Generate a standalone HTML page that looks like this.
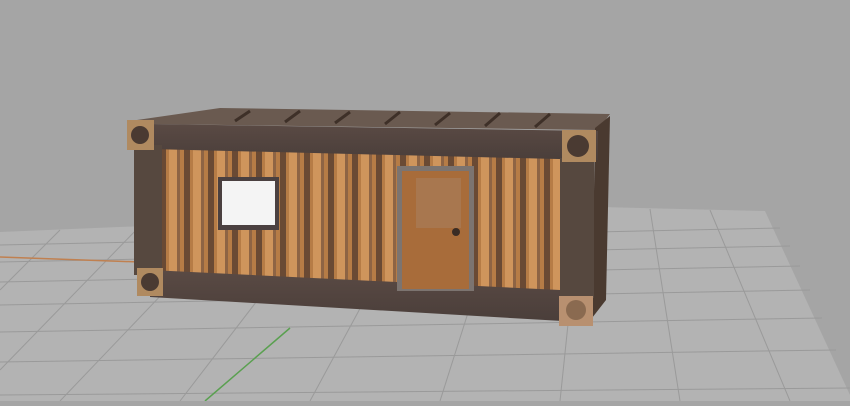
<!DOCTYPE html><html><head><style>body{margin:0;width:850px;height:401px;overflow:hidden;background:#a5a5a5}</style></head><body>
<svg width="850" height="401" viewBox="0 0 850 401" xmlns="http://www.w3.org/2000/svg">
<defs>
<pattern id="cor" x="160" y="0" width="24" height="10" patternUnits="userSpaceOnUse">
<rect width="24" height="10" fill="#b67c46"/>
<rect x="0" width="6" height="10" fill="#6a4a34"/>
<rect x="9" width="8" height="10" fill="#cf955c"/>
<rect x="17" width="3" height="10" fill="#8e6444"/>
</pattern>
<linearGradient id="beam" x1="0" y1="0" x2="0" y2="1"><stop offset="0" stop-color="#5a4a44"/><stop offset="1" stop-color="#4a3e3a"/></linearGradient>
</defs>
<rect width="850" height="401" fill="#a5a5a5"/>
<polygon points="0,232 600,207 765,211 850,395 850,401 0,401" fill="#b3b3b3"/>
<g stroke="#9a9a9a" stroke-width="1">
<line x1="0" y1="245" x2="780" y2="228"/><line x1="0" y1="262" x2="790" y2="246"/>
<line x1="0" y1="282" x2="800" y2="266"/><line x1="0" y1="305" x2="810" y2="290"/>
<line x1="0" y1="332" x2="822" y2="318"/><line x1="0" y1="362" x2="836" y2="350"/>
<line x1="0" y1="395" x2="850" y2="388"/>
<line x1="60" y1="230" x2="0" y2="290"/><line x1="140" y1="226" x2="0" y2="370"/>
<line x1="230" y1="223" x2="60" y2="401"/><line x1="320" y1="219" x2="180" y2="401"/>
<line x1="410" y1="216" x2="310" y2="401"/><line x1="500" y1="212" x2="440" y2="401"/>
<line x1="580" y1="209" x2="560" y2="401"/><line x1="650" y1="209" x2="680" y2="401"/>
<line x1="710" y1="210" x2="790" y2="401"/>
</g>
<line x1="0" y1="257" x2="140" y2="262" stroke="#c08050" stroke-width="1.5"/>
<line x1="205" y1="401" x2="290" y2="328" stroke="#5aa050" stroke-width="1.5"/>
<!-- roof -->
<polygon points="130,121 220,108 610,114 598,130 150,124" fill="#6a5a50"/>
<g stroke="#3e3028" stroke-width="3">
<line x1="250" y1="111" x2="235" y2="121"/><line x1="300" y1="111" x2="285" y2="122"/><line x1="350" y1="112" x2="335" y2="123"/><line x1="400" y1="112" x2="385" y2="124"/><line x1="450" y1="113" x2="435" y2="125"/><line x1="500" y1="113" x2="485" y2="126"/><line x1="550" y1="114" x2="535" y2="127"/>
</g>
<!-- side face -->
<polygon points="595,128 610,116 606,300 592,318" fill="#4a3a30"/>
<!-- wall -->
<polygon points="158,146 562,156 562,292 158,272" fill="url(#cor)"/>
<!-- top beam -->
<polygon points="150,124 598,131 598,160 150,149" fill="url(#beam)"/>
<!-- bottom beam -->
<polygon points="150,270 560,290 580,295 580,322 150,297" fill="url(#beam)"/>
<!-- posts -->
<rect x="134" y="145" width="28" height="130" fill="#56483f"/>
<rect x="560" y="158" width="34" height="140" fill="#56483f"/>
<!-- corners -->
<rect x="127" y="120" width="27" height="30" fill="#b08a60"/><circle cx="140" cy="135" r="9" fill="#4a3a32"/>
<rect x="562" y="130" width="34" height="32" fill="#b08a60"/><circle cx="578" cy="146" r="11" fill="#4a3a32"/>
<rect x="137" y="268" width="26" height="28" fill="#b08a60"/><circle cx="150" cy="282" r="9" fill="#4a3a32"/>
<rect x="559" y="296" width="34" height="30" fill="#b89070"/><circle cx="576" cy="310" r="10" fill="#8a6a50"/>
<!-- window -->
<rect x="218" y="177" width="61" height="53" fill="#4a4040"/>
<rect x="222" y="181" width="53" height="44" fill="#f4f4f4"/>
<!-- door -->
<rect x="397" y="166" width="77" height="125" fill="#7c7470"/>
<rect x="402" y="171" width="67" height="118" fill="#a86c3a"/>
<rect x="416" y="178" width="45" height="50" fill="#a88a70" opacity="0.4"/>
<circle cx="456" cy="232" r="4" fill="#3a2c24"/>
</svg>
</body></html>
